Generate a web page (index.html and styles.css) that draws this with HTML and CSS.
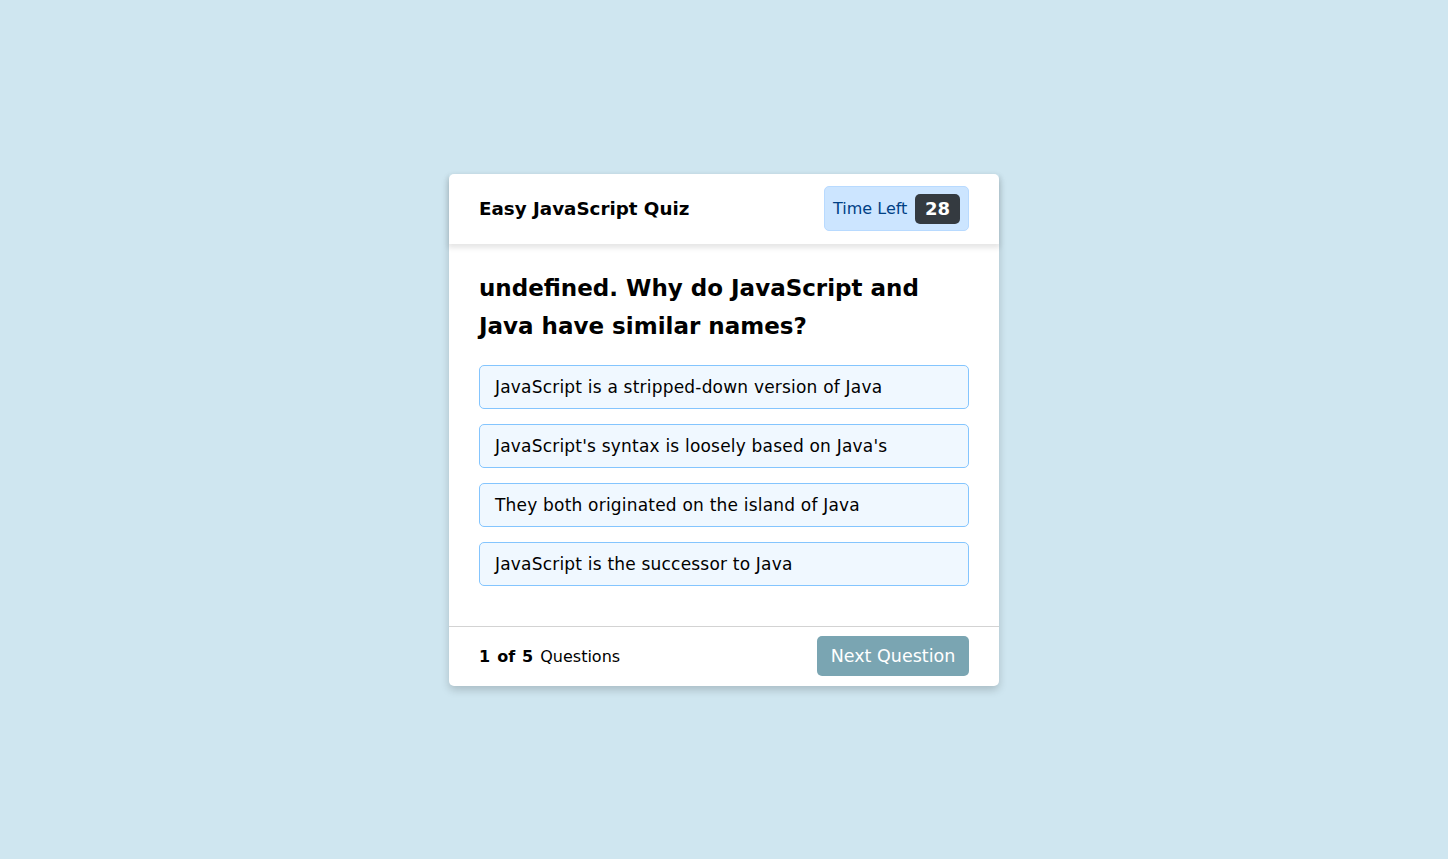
FILE: index.html
```html
<!DOCTYPE html>
<html>
<head>
<meta charset="utf-8">
<link rel="stylesheet" href="styles.css">
</head>
<body>
<div class="quiz-box">
  <header class="quiz-header">
    <div class="title">Easy JavaScript Quiz</div>
    <div class="timer">
      <span class="timer-text">Time Left</span>
      <span class="timer-sec">28</span>
    </div>
  </header>
  <section class="quiz-body">
    <div class="que-text">undefined. Why do JavaScript and Java have similar names?</div>
    <div class="option-list">
      <div class="option">JavaScript is a stripped-down version of Java</div>
      <div class="option">JavaScript's syntax is loosely based on Java's</div>
      <div class="option">They both originated on the island of Java</div>
      <div class="option">JavaScript is the successor to Java</div>
    </div>
  </section>
  <footer class="quiz-footer">
    <div class="total-que"><b>1</b><b>of</b><b>5</b><span>Questions</span></div>
    <button class="next-btn">Next Question</button>
  </footer>
</div>
</body>
</html>
```
FILE: styles.css
```css
* { box-sizing: border-box; margin: 0; padding: 0; }
html, body { height: 100%; }
body {
  background: #cfe6f0;
  font-family: "DejaVu Sans", sans-serif;
  display: flex;
  align-items: center;
  justify-content: center;
}
.quiz-box {
  width: 550px;
  background: #fff;
  border-radius: 5px;
  box-shadow: 0 4px 8px rgba(0,0,0,0.18);
}
.quiz-header {
  height: 70px;
  padding: 0 30px;
  display: flex;
  align-items: center;
  justify-content: space-between;
  box-shadow: 0 3px 5px 1px rgba(0,0,0,0.1);
  position: relative;
}
.title { font-size: 18.3px; font-weight: 700; color: #000; }
.timer {
  width: 145px;
  height: 45px;
  background: #cce5ff;
  border: 1px solid #b8daff;
  border-radius: 5px;
  display: flex;
  align-items: center;
  justify-content: space-between;
  padding: 0 8px;
}
.timer-text { color: #004085; font-size: 16px; }
.timer-sec {
  width: 45px;
  height: 30px;
  background: #343a40;
  color: #fff;
  border-radius: 5px;
  font-size: 18px;
  font-weight: 700;
  display: flex;
  align-items: center;
  justify-content: center;
}
.quiz-body { padding: 25px 30px 40px; }
.que-text { font-size: 23px; font-weight: 700; line-height: 38px; color: #000; }
.option-list { margin-top: 20px; display: flex; flex-direction: column; gap: 15px; }
.option {
  height: 44px;
  background: aliceblue;
  border: 1px solid #84c5fe;
  border-radius: 5px;
  padding: 0 15px;
  display: flex;
  align-items: center;
  font-size: 17px;
  letter-spacing: 0.2px;
  color: #000;
}
.quiz-footer {
  height: 60px;
  border-top: 1px solid lightgrey;
  padding: 0 30px;
  display: flex;
  align-items: center;
  justify-content: space-between;
}
.total-que { display: flex; gap: 7px; font-size: 16px; color: #000; }
.total-que b { font-weight: 600; }
.next-btn {
  height: 40px;
  width: 152px;
  background: #7aa5b2;
  color: #fff;
  border: none;
  border-radius: 5px;
  font-family: inherit;
  font-size: 17.5px;
}
```
